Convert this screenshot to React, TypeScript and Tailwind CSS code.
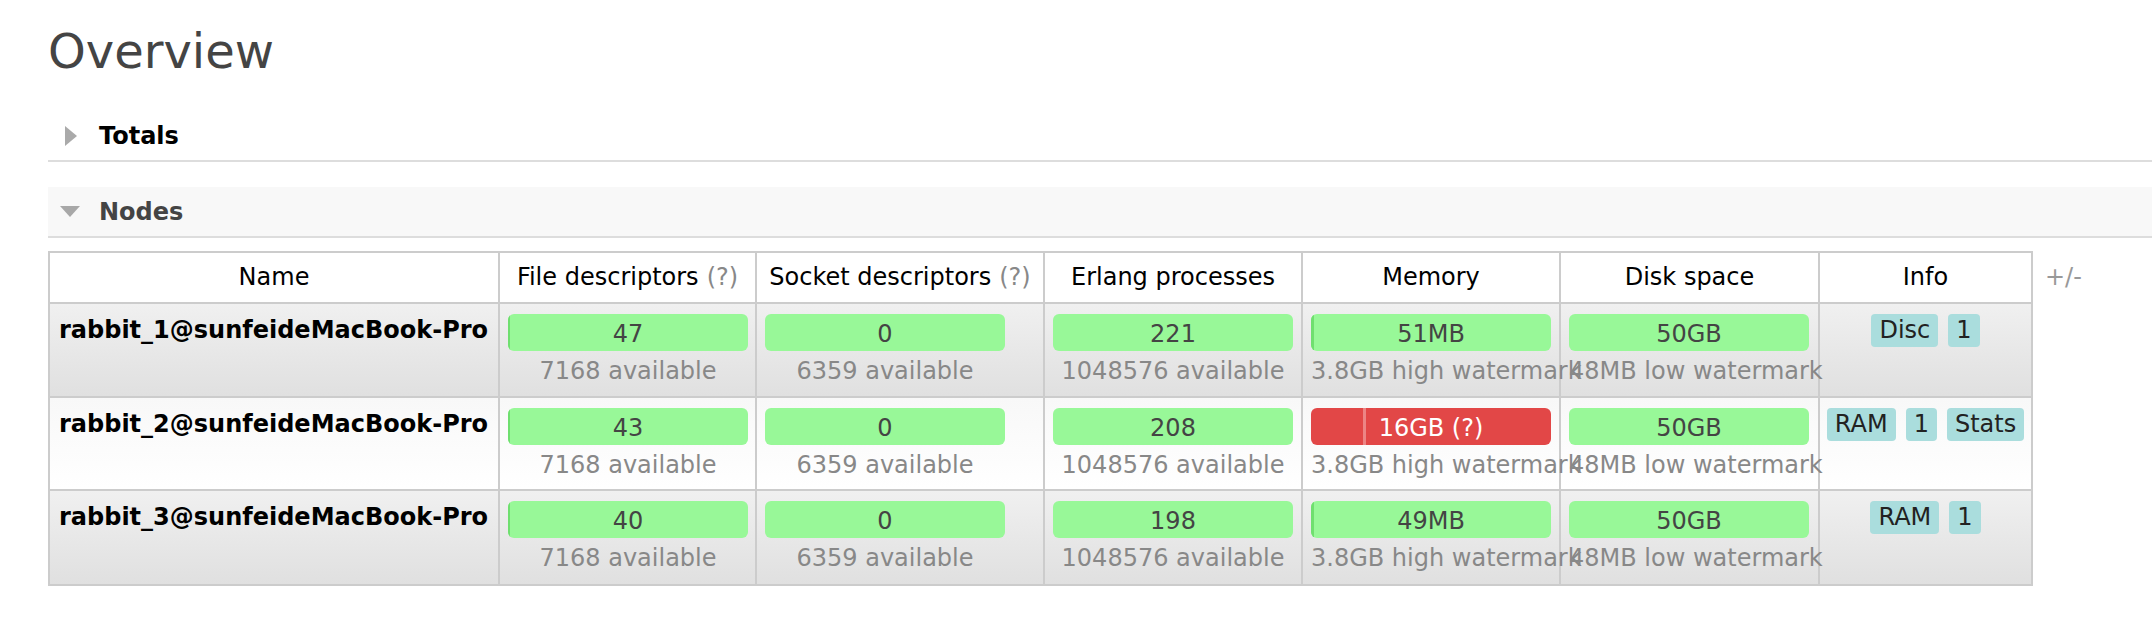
import React from "react";

type BarSpec = {
  value: string;
  sub: string;
  fill?: number; // px width of darker used strip
  red?: boolean;
  mark?: number;
};

type Row = {
  name: string;
  bars: BarSpec[];
  info: string[];
  bg: string;
};

const rows: Row[] = [
  {
    name: "rabbit_1@sunfeideMacBook-Pro",
    bg: "bg-linear-to-b from-[#f0f0f0] to-[#e0e0e0]",
    bars: [
      { value: "47", sub: "7168 available", fill: 2 },
      { value: "0", sub: "6359 available" },
      { value: "221", sub: "1048576 available" },
      { value: "51MB", sub: "3.8GB high watermark", fill: 3 },
      { value: "50GB", sub: "48MB low watermark" },
    ],
    info: ["Disc", "1"],
  },
  {
    name: "rabbit_2@sunfeideMacBook-Pro",
    bg: "bg-linear-to-b from-[#f8f8f8] to-[#ffffff]",
    bars: [
      { value: "43", sub: "7168 available", fill: 2 },
      { value: "0", sub: "6359 available" },
      { value: "208", sub: "1048576 available" },
      { value: "16GB (?)", sub: "3.8GB high watermark", red: true, mark: 52 },
      { value: "50GB", sub: "48MB low watermark" },
    ],
    info: ["RAM", "1", "Stats"],
  },
  {
    name: "rabbit_3@sunfeideMacBook-Pro",
    bg: "bg-linear-to-b from-[#f0f0f0] to-[#e0e0e0]",
    bars: [
      { value: "40", sub: "7168 available", fill: 2 },
      { value: "0", sub: "6359 available" },
      { value: "198", sub: "1048576 available" },
      { value: "49MB", sub: "3.8GB high watermark", fill: 3 },
      { value: "50GB", sub: "48MB low watermark" },
    ],
    info: ["RAM", "1"],
  },
];

function Bar({ b }: { b: BarSpec }) {
  return (
    <div className="w-[240px]">
      <div
        className={`grid h-[37px] overflow-hidden rounded-[6px] ${
          b.red ? "bg-[#e24747]" : "bg-[#98f898]"
        }`}
      >
        {b.fill ? (
          <div
            className="col-start-1 row-start-1 h-full justify-self-start bg-[#6fdf6f]"
            style={{ width: b.fill }}
          />
        ) : null}
        {b.mark ? (
          <div
            className="col-start-1 row-start-1 h-full w-[3px] justify-self-start bg-[#ec8585]"
            style={{ marginLeft: b.mark }}
          />
        ) : null}
        <div
          className={`col-start-1 row-start-1 flex items-center justify-center pt-[4px] leading-[29px] ${
            b.red ? "text-white" : "text-[#444]"
          }`}
        >
          {b.value}
        </div>
      </div>
      <div className="relative z-10 mt-[6px] whitespace-nowrap text-center leading-[29px] text-[#888]">
        {b.sub}
      </div>
    </div>
  );
}

const headers: { label: string; q?: boolean }[] = [
  { label: "Name" },
  { label: "File descriptors", q: true },
  { label: "Socket descriptors", q: true },
  { label: "Erlang processes" },
  { label: "Memory" },
  { label: "Disk space" },
  { label: "Info" },
];

export default function App() {
  return (
    <div className="min-h-screen bg-white font-['DejaVu_Sans',Verdana,sans-serif] text-[24px] text-[#484848]">
      <div className="pl-[48px]">
        <h1 className="pt-[27px] text-[48px] leading-[48px] font-normal text-[#444]">
          Overview
        </h1>

        <div className="mt-[36px] flex h-[51px] items-center border-b-2 border-[#ddd] pl-[17px]">
          <svg width="12" height="20" viewBox="0 0 12 20">
            <polygon points="0,0 12,10 0,20" fill="#aaa" />
          </svg>
          <span className="ml-[22px] font-bold text-black">Totals</span>
        </div>

        <div className="mt-[25px] flex h-[51px] items-center border-b-2 border-[#ddd] bg-[#f8f8f8] pl-[12px]">
          <svg width="20" height="11" viewBox="0 0 20 11">
            <polygon points="0,0 20,0 10,11" fill="#a8a8a8" />
          </svg>
          <span className="ml-[19px] font-bold text-[#444]">Nodes</span>
        </div>

        <div className="mt-[13px] flex items-start">
          <div className="grid grid-cols-[450px_257px_288px_258px_258px_259px_213px] grid-rows-[51px_94px_93px_95px] border-l-2 border-t-2 border-[#ccc]">
            {headers.map((h) => (
              <div
                key={h.label}
                className="flex items-center justify-center whitespace-nowrap border-b-2 border-r-2 border-[#ccc] bg-white leading-[29px] text-black"
              >
                {h.label}
                {h.q ? <span className="ml-[8px] text-[#888]">(?)</span> : null}
              </div>
            ))}
            {rows.map((r) => (
              <React.Fragment key={r.name}>
                <div
                  className={`border-b-2 border-r-2 border-[#ccc] pl-[9px] pt-[12px] font-bold leading-[29px] text-black ${r.bg}`}
                >
                  {r.name}
                </div>
                {r.bars.map((b, i) => (
                  <div
                    key={i}
                    className={`border-b-2 border-r-2 border-[#ccc] pl-[8px] pt-[10px] ${r.bg}`}
                  >
                    <Bar b={b} />
                  </div>
                ))}
                <div
                  className={`flex items-start justify-center gap-[10px] border-b-2 border-r-2 border-[#ccc] pt-[10px] ${r.bg}`}
                >
                  {r.info.map((t, i) => (
                    <span
                      key={i}
                      className="flex h-[33px] items-center rounded-[4px] bg-[#aadddd] px-[8px] leading-[29px] text-[#222]"
                    >
                      {t}
                    </span>
                  ))}
                </div>
              </React.Fragment>
            ))}
          </div>
          <div className="ml-[12px] flex h-[51px] items-center text-[#999]">+/-</div>
        </div>
      </div>
    </div>
  );
}
